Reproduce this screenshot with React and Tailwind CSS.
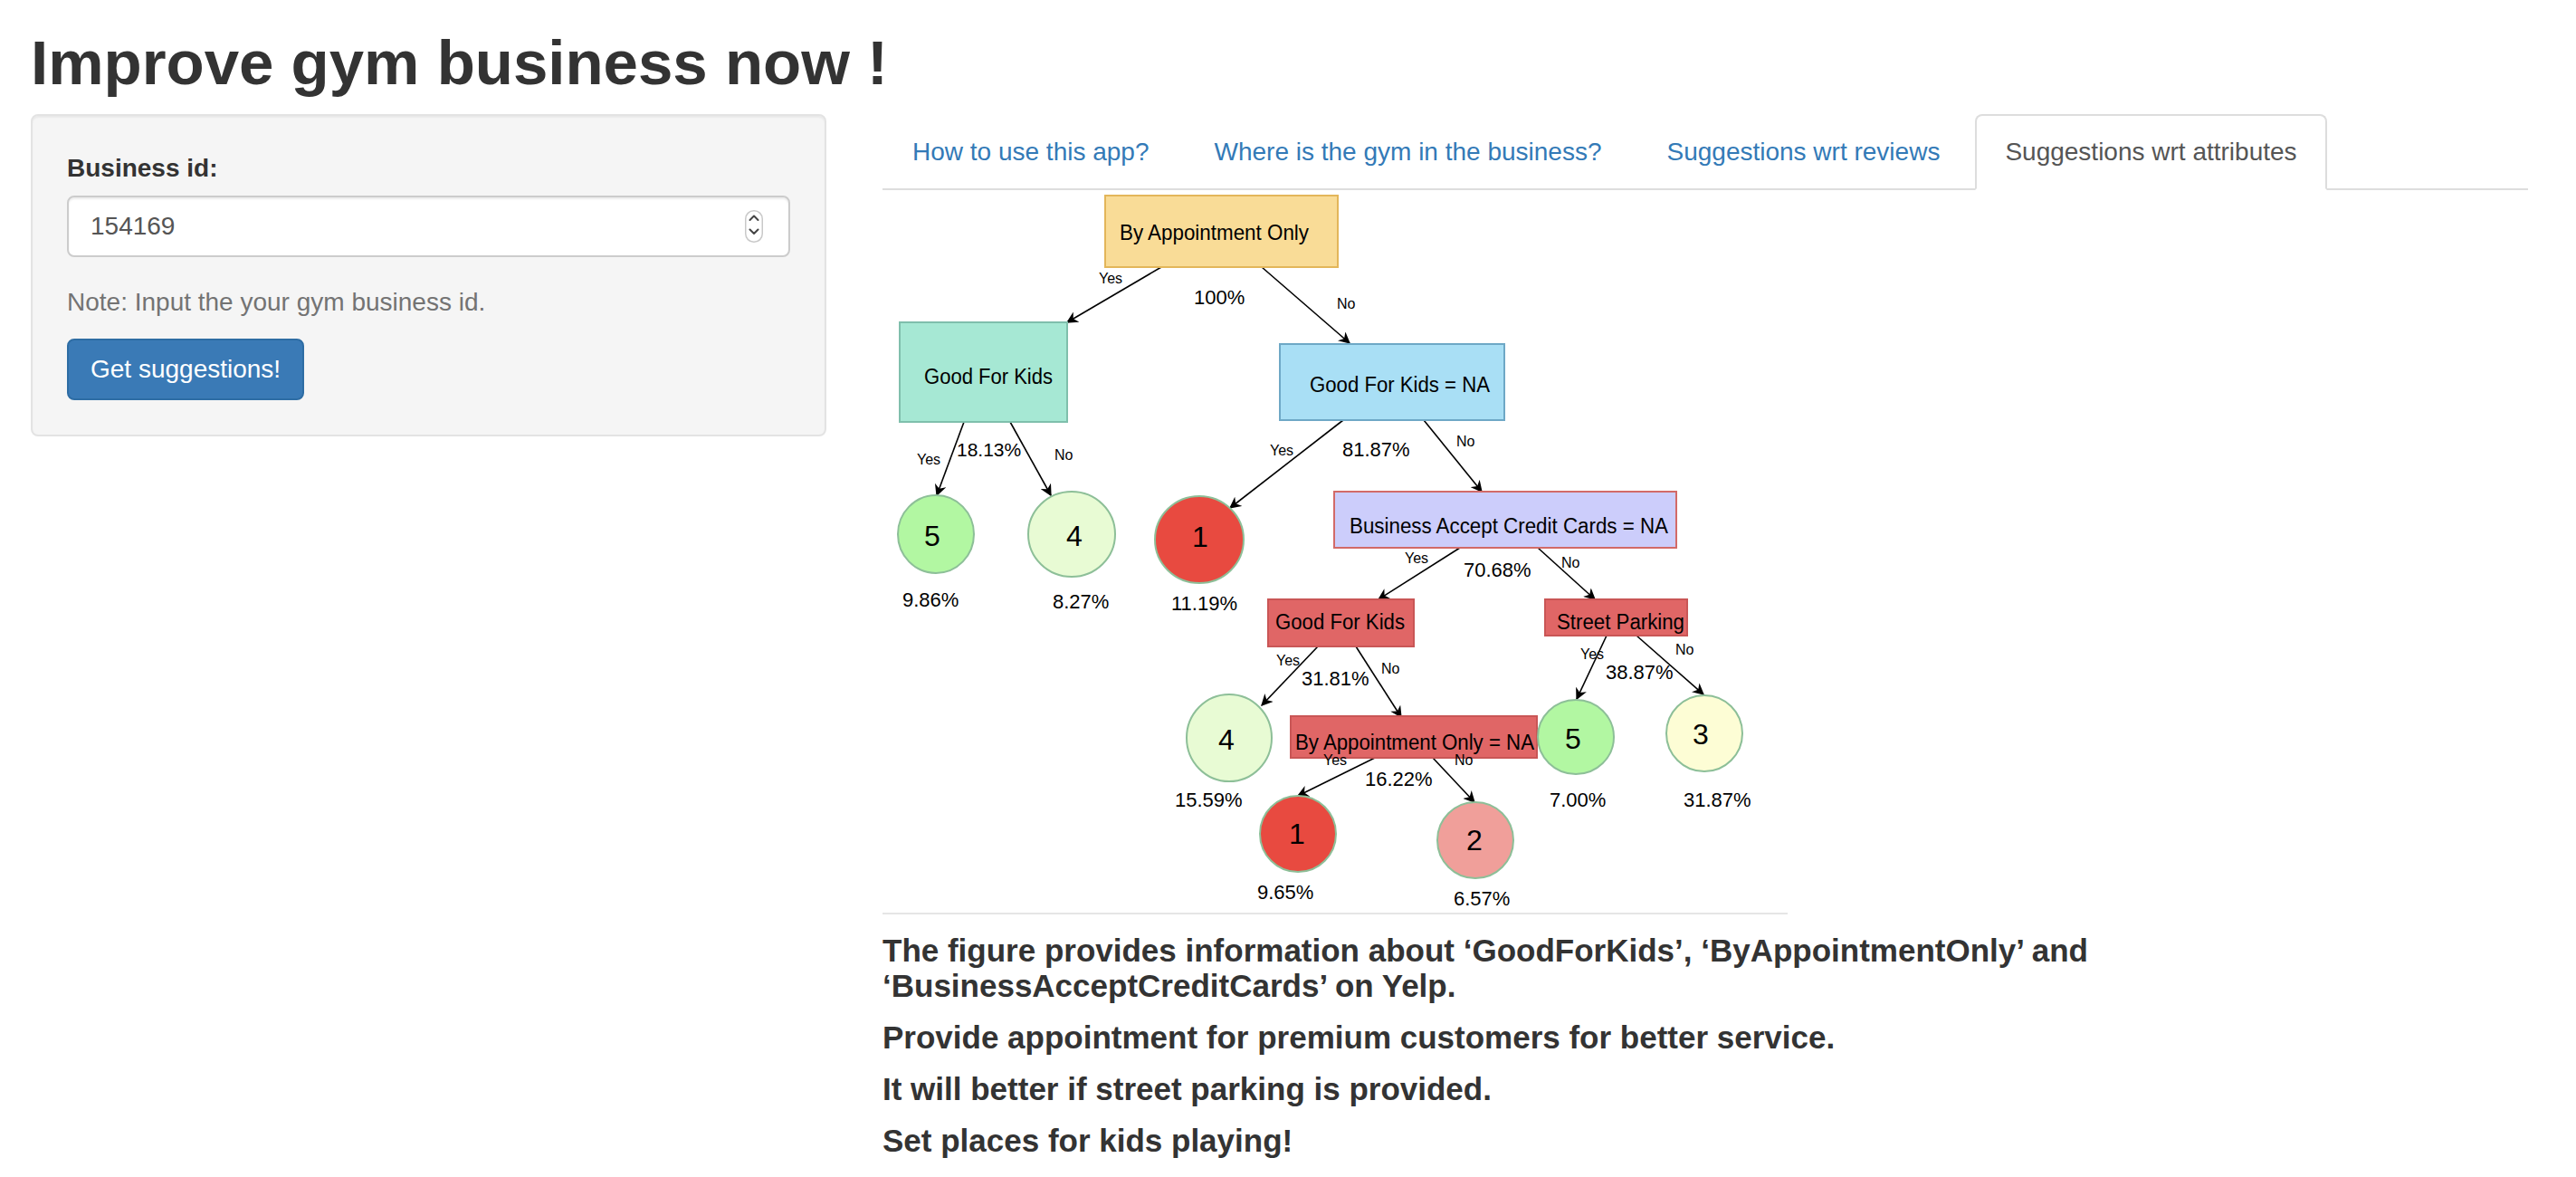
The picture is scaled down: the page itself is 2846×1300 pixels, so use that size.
import React from "react";

const tabs = [
  "How to use this app?",
  "Where is the gym in the business?",
  "Suggestions wrt reviews",
  "Suggestions wrt attributes",
];

// decision tree nodes, in page coordinates (svg viewBox starts at 975,210)
const boxes = [
  { x: 1221, y: 216, w: 257, h: 79, fill: "#f9dc97", stroke: "#e3b65a", label: "By Appointment Only", tx: 1237, ty: 265, tl: 209, fs: 24 },
  { x: 994, y: 356, w: 185, h: 110, fill: "#a6e8d4", stroke: "#7fbfac", label: "Good For Kids", tx: 1021, ty: 424, tl: 142, fs: 23 },
  { x: 1414, y: 380, w: 248, h: 84, fill: "#a9dff5", stroke: "#6ea8c6", label: "Good For Kids = NA", tx: 1447, ty: 433, tl: 199, fs: 23 },
  { x: 1474, y: 543, w: 378, h: 62, fill: "#cccdfb", stroke: "#d26a68", label: "Business Accept Credit Cards = NA", tx: 1491, ty: 589, tl: 352, fs: 23 },
  { x: 1401, y: 662, w: 161, h: 52, fill: "#e06666", stroke: "#c95656", label: "Good For Kids", tx: 1409, ty: 695, tl: 143, fs: 23 },
  { x: 1707, y: 662, w: 157, h: 40, fill: "#e06666", stroke: "#c95656", label: "Street Parking", tx: 1720, ty: 695, tl: 141, fs: 23 },
  { x: 1426, y: 791, w: 272, h: 46, fill: "#e06666", stroke: "#c95656", label: "By Appointment Only = NA", tx: 1431, ty: 828, tl: 264, fs: 23 },
];

const circles = [
  { cx: 1034, cy: 590, rx: 42, ry: 43, fill: "#b2f7a2", n: "5", tx: 1030, ty: 603 },
  { cx: 1184, cy: 590, rx: 48, ry: 47, fill: "#e8fbd4", n: "4", tx: 1187, ty: 603 },
  { cx: 1325, cy: 596, rx: 49, ry: 48, fill: "#e84a40", n: "1", tx: 1326, ty: 604 },
  { cx: 1358, cy: 815, rx: 47, ry: 48, fill: "#e8fbd4", n: "4", tx: 1355, ty: 828 },
  { cx: 1741, cy: 814, rx: 42, ry: 41, fill: "#b2f7a2", n: "5", tx: 1738, ty: 827 },
  { cx: 1883, cy: 810, rx: 42, ry: 42, fill: "#fdfdd5", n: "3", tx: 1879, ty: 822 },
  { cx: 1434, cy: 921, rx: 42, ry: 42, fill: "#e84a40", n: "1", tx: 1433, ty: 932 },
  { cx: 1630, cy: 928, rx: 42, ry: 42, fill: "#f09f9a", n: "2", tx: 1629, ty: 939 },
];

const arrows = [
  [1283, 295, 1179, 356],
  [1394, 295, 1491, 379],
  [1065, 466, 1035, 547],
  [1116, 466, 1161, 547],
  [1484, 464, 1359, 561],
  [1573, 464, 1637, 543],
  [1613, 605, 1523, 662],
  [1699, 605, 1762, 662],
  [1456, 714, 1394, 779],
  [1498, 714, 1548, 792],
  [1519, 837, 1434, 879],
  [1583, 837, 1629, 886],
  [1775, 702, 1742, 772],
  [1808, 702, 1882, 767],
];

const labels = [
  ["Yes", 1214, 313, 16], ["No", 1477, 341, 16], ["100%", 1319, 336, 22],
  ["Yes", 1013, 513, 16], ["18.13%", 1057, 504, 21], ["No", 1165, 508, 16],
  ["9.86%", 997, 670, 22], ["8.27%", 1163, 672, 22], ["11.19%", 1294, 674, 22],
  ["Yes", 1403, 503, 16], ["81.87%", 1483, 504, 22], ["No", 1609, 493, 16],
  ["Yes", 1552, 622, 16], ["70.68%", 1617, 637, 22], ["No", 1725, 627, 16],
  ["Yes", 1410, 735, 16], ["31.81%", 1438, 757, 22], ["No", 1526, 744, 16],
  ["Yes", 1746, 728, 16], ["38.87%", 1774, 750, 22], ["No", 1851, 723, 16],
  ["Yes", 1462, 845, 16], ["16.22%", 1508, 868, 22], ["No", 1607, 845, 16],
  ["15.59%", 1298, 891, 22], ["7.00%", 1712, 891, 22], ["31.87%", 1860, 891, 22],
  ["9.65%", 1389, 993, 22], ["6.57%", 1606, 1000, 22],
];

function Tree() {
  return (
    <svg width="1000" height="798" viewBox="975 210 1000 798" className="block">
      <defs>
        <marker id="arr" viewBox="0 0 10 10" refX="9" refY="5" markerWidth="13" markerHeight="13" markerUnits="userSpaceOnUse" orient="auto">
          <path d="M0,0 L10,5 L0,10 L3,5 Z" fill="#000" />
        </marker>
      </defs>
      {arrows.map(([x1, y1, x2, y2], i) => (
        <line key={i} x1={x1} y1={y1} x2={x2} y2={y2} stroke="#000" strokeWidth="1.6" markerEnd="url(#arr)" />
      ))}
      {boxes.map((b, i) => (
        <g key={i}>
          <rect x={b.x} y={b.y} width={b.w} height={b.h} fill={b.fill} stroke={b.stroke} strokeWidth="2" />
          <text x={b.tx} y={b.ty} fontSize={b.fs} textLength={b.tl} lengthAdjust="spacingAndGlyphs" fill="#000">
            {b.label}
          </text>
        </g>
      ))}
      {circles.map((c, i) => (
        <g key={i}>
          <ellipse cx={c.cx} cy={c.cy} rx={c.rx} ry={c.ry} fill={c.fill} stroke="#8dbf98" strokeWidth="2" />
          <text x={c.tx} y={c.ty} fontSize="32" textAnchor="middle" fill="#000">
            {c.n}
          </text>
        </g>
      ))}
      {labels.map(([t, x, y, fs], i) => (
        <text key={i} x={x} y={y} fontSize={fs} fill="#000">
          {t}
        </text>
      ))}
    </svg>
  );
}

function Spinner() {
  return (
    <svg width="20" height="36" viewBox="0 0 20 36">
      <rect x="0.75" y="0.75" width="18.5" height="34.5" rx="9" fill="#fff" stroke="#c9c9c9" strokeWidth="1.5" />
      <path d="M5.5 11 L10 6.5 L14.5 11" fill="none" stroke="#444" strokeWidth="2" strokeLinecap="round" strokeLinejoin="round" />
      <path d="M5.5 21.5 L10 26 L14.5 21.5" fill="none" stroke="#444" strokeWidth="2" strokeLinecap="round" strokeLinejoin="round" />
    </svg>
  );
}

export default function App() {
  return (
    <div className="min-h-screen bg-white font-['Liberation_Sans',Arial,sans-serif] text-[#333333]">
      <div className="px-[30px] pt-[30px] pb-[20px]">
        <h1 className="ml-[4px] text-[69px] font-bold leading-[79px]">Improve gym business now !</h1>
        <div className="mt-[17px] flex items-start">
          <aside className="ml-[4px] w-[879px] rounded-[8px] border-2 border-[#e3e3e3] bg-[#f5f5f5] pl-[38px] pr-[38px] py-[38px] shadow-[inset_0_2px_2px_rgba(0,0,0,0.05)]">
            <label className="block text-[28px] font-bold leading-[40px] mb-[10px]">Business id:</label>
            <div className="flex h-[68px] items-center justify-between rounded-[8px] border-2 border-[#cccccc] bg-white pl-[24px] pr-[28px] shadow-[inset_0_2px_2px_rgba(0,0,0,0.075)]">
              <span className="text-[28px] text-[#555555]">154169</span>
              <Spinner />
            </div>
            <p className="mt-[30px] text-[28px] leading-[40px] text-[#737373]">Note: Input the your gym business id.</p>
            <button className="mt-[20px] rounded-[8px] border-2 border-[#2e6da4] bg-[#3a7ab6] px-[24px] py-[12px] text-[28px] leading-[40px] text-white">
              Get suggestions!
            </button>
          </aside>

          <main className="ml-[62px] w-[1818px]">
            <ul className="flex border-b-2 border-[#dddddd]">
              {tabs.map((t, i) => {
                const active = i === 3;
                return (
                  <li key={t} className="-mb-[2px] mr-[6px]">
                    <a
                      className={
                        active
                          ? "block rounded-t-[8px] border-2 border-[#dddddd] border-b-white bg-white px-[31px] py-[20px] text-[28px] leading-[40px] text-[#555555]"
                          : "block rounded-t-[8px] border-2 border-transparent px-[31px] py-[20px] text-[28px] leading-[40px] text-[#337ab7]"
                      }
                    >
                      {t}
                    </a>
                  </li>
                );
              })}
            </ul>
            <div className="w-[1000px] border-b-2 border-[#e5e5e5]">
              <Tree />
            </div>
            <div className="flex max-w-[1600px] flex-col gap-[18px] pt-[20px] text-[35px] font-bold leading-[39px]">
              <h4>The figure provides information about ‘GoodForKids’, ‘ByAppointmentOnly’ and ‘BusinessAcceptCreditCards’ on Yelp.</h4>
              <h4>Provide appointment for premium customers for better service.</h4>
              <h4>It will better if street parking is provided.</h4>
              <h4>Set places for kids playing!</h4>
            </div>
          </main>
        </div>
      </div>
    </div>
  );
}
